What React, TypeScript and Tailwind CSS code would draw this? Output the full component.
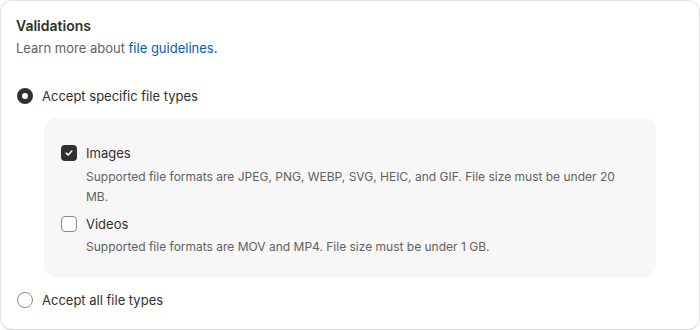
import React from 'react';

const Radio: React.FC<{ checked?: boolean }> = ({ checked }) => (
  <span
    className={`box-border inline-block w-4 h-4 rounded-full shrink-0 ${
      checked ? 'border-[5px] border-[#303030] bg-white' : 'border border-[#8a8a8a] bg-white'
    }`}
  />
);

const Checkbox: React.FC<{ checked?: boolean }> = ({ checked }) =>
  checked ? (
    <span className="flex items-center justify-center w-4 h-4 rounded-[4px] bg-[#303030] shrink-0">
      <svg width="10" height="10" viewBox="0 0 10 10" fill="none">
        <path d="M2.2 5.2 4.1 7 7.8 3" stroke="white" strokeWidth="1.6" strokeLinecap="round" strokeLinejoin="round" />
      </svg>
    </span>
  ) : (
    <span className="box-border inline-block w-4 h-4 rounded-[4px] border border-[#8a8a8a] bg-white shrink-0" />
  );

export default function App() {
  return (
    <div className="w-[700px] h-[330px] bg-white" style={{ fontFamily: 'Inter, "Noto Sans", sans-serif' }}>
      <div className="box-border w-[700px] h-[330px] rounded-xl border border-[#e3e3e3] border-b-[#d4d4d4] bg-white px-[15px] pt-[15px] text-[13px] leading-5 text-[#303030]">
        {/* Header */}
        <h2 className="font-semibold text-[14px] leading-5 text-[#303030]">Validations</h2>
        <p className="mt-0.5 text-[#616161]">
          Learn more about <span className="text-[#005bd3]">file guidelines.</span>
        </p>

        {/* Specific types */}
        <div className="mt-[28px] flex items-center pl-px">
          <Radio checked />
          <span className="ml-[9px]">Accept specific file types</span>
        </div>

        <div className="mt-3 ml-[28px] w-[612px] rounded-xl bg-[#f7f7f7] pt-[25px] pb-5 pl-[17px] pr-4">
          <div className="flex items-center">
            <Checkbox checked />
            <span className="ml-[9px]">Images</span>
          </div>
          <p className="mt-1 ml-[25px] max-w-[540px] text-[12px] leading-5 text-[#616161]">
            Supported file formats are JPEG, PNG, WEBP, SVG, HEIC, and GIF. File size must be under 20 MB.
          </p>

          <div className="mt-[7px] flex items-center">
            <Checkbox />
            <span className="ml-[9px]">Videos</span>
          </div>
          <p className="mt-[3px] ml-[25px] text-[12px] leading-5 text-[#616161]">
            Supported file formats are MOV and MP4. File size must be under 1&nbsp;GB.
          </p>
        </div>

        {/* All types */}
        <div className="mt-[13px] flex items-center pl-px">
          <Radio />
          <span className="ml-[9px]">Accept all file types</span>
        </div>
      </div>
    </div>
  );
}
